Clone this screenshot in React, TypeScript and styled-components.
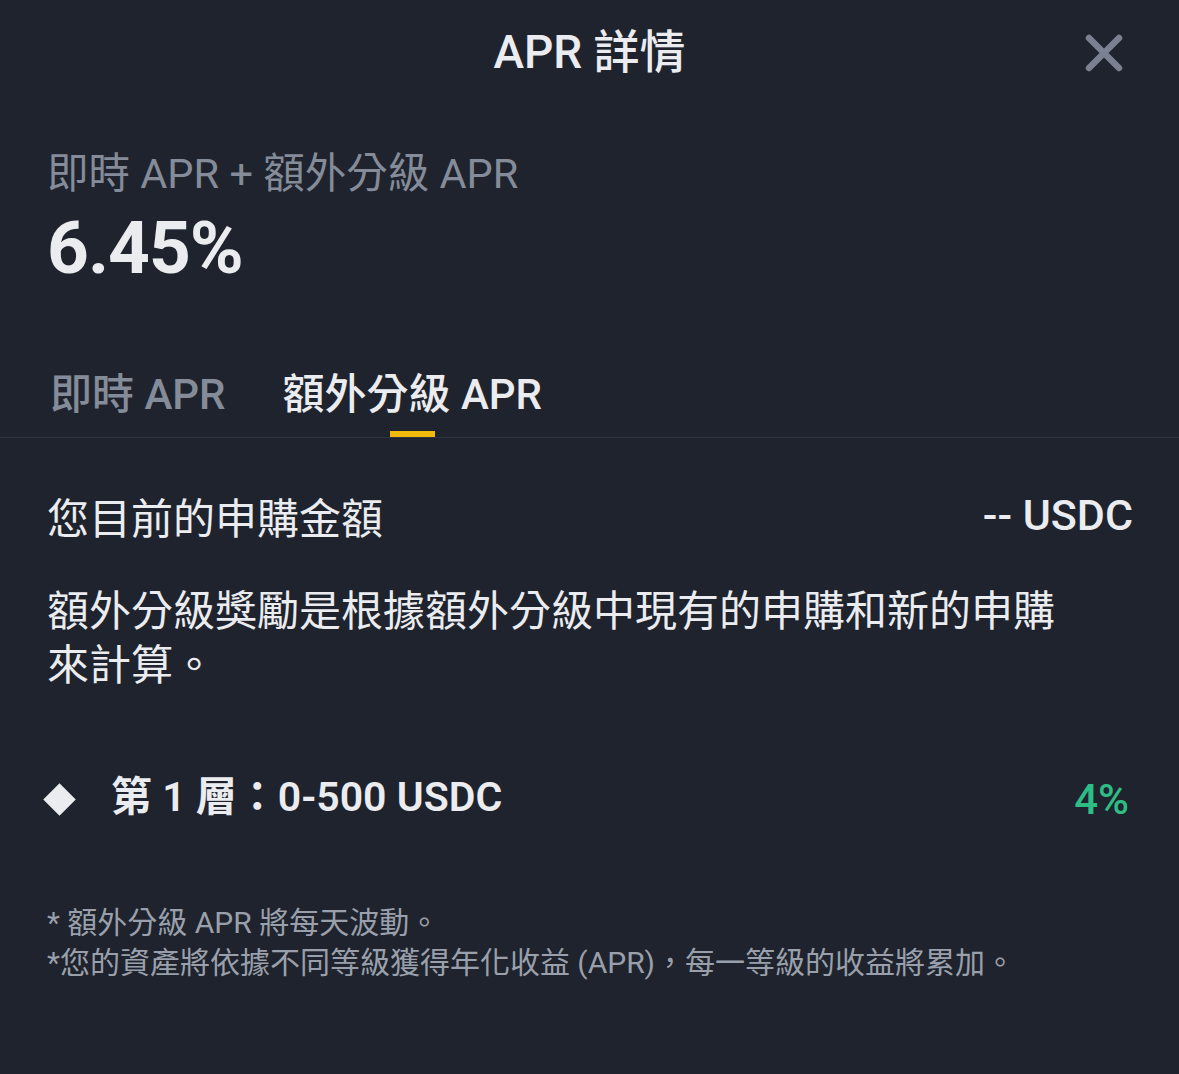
import React from "react";
import styled, { createGlobalStyle } from "styled-components";

const Global = createGlobalStyle`
  html, body { margin: 0; padding: 0; background: #1f232d; }
  body { font-family: Roboto, "Noto Sans CJK TC", "Noto Sans", sans-serif; color: #eaecef; }
  * { box-sizing: border-box; }
`;

const Page = styled.div`
  width: 1179px;
  min-height: 1074px;
  background: #1f232d;
  display: flex;
  flex-direction: column;
`;

const Header = styled.header`
  height: 104px;
  display: flex;
  align-items: center;
  justify-content: center;
  position: relative;
`;

const Title = styled.h1`
  margin: 0;
  font-size: 46px;
  font-weight: 500;
  line-height: 104px;
  color: #eaecef;
`;

const CloseButton = styled.button`
  position: absolute;
  right: 55px;
  top: 33px;
  width: 40px;
  height: 40px;
  padding: 0;
  border: none;
  background: transparent;
  display: flex;
  align-items: center;
  justify-content: center;
`;

const Summary = styled.section`
  padding: 46px 47px 0;
  display: flex;
  flex-direction: column;
  gap: 10px;
`;

const SummaryLabel = styled.div`
  font-size: 41.5px;
  line-height: 48px;
  color: #858c99;
`;

const SummaryValue = styled.div`
  font-size: 73px;
  font-weight: 700;
  line-height: 80px;
  color: #eaecef;
  letter-spacing: -1px;
`;

const TabBar = styled.nav`
  margin-top: 82px;
  padding: 0 50px;
  display: flex;
  gap: 57px;
  border-bottom: 1px solid #2f3440;
`;

const Tab = styled.div<{ $active?: boolean }>`
  display: flex;
  flex-direction: column;
  align-items: center;
  font-size: 42px;
  line-height: 50px;
  font-weight: 500;
  color: ${(p) => (p.$active ? "#eaecef" : "#858c99")};
  &::after {
    content: "";
    display: block;
    margin-top: 11px;
    width: 45px;
    height: 6px;
    background: ${(p) => (p.$active ? "#f0b90b" : "transparent")};
  }
`;

const Content = styled.section`
  padding: 52px 46px 0 47px;
  display: flex;
  flex-direction: column;
`;

const AmountRow = styled.div`
  display: flex;
  justify-content: space-between;
  align-items: center;
  height: 56px;
  margin-top: -3px;
  font-size: 42px;
  color: #eaecef;
`;

const AmountValue = styled.span`
  font-weight: 500;
  font-size: 43px;
`;

const Paragraph = styled.p`
  margin: 42px 0 0;
  font-size: 42px;
  line-height: 54px;
  color: #eaecef;
  max-width: 1020px;
`;

const TierRow = styled.div`
  margin-top: 76px;
  height: 60px;
  display: flex;
  align-items: center;
`;

const Diamond = styled.span`
  width: 23px;
  height: 23px;
  margin-left: 1px;
  margin-right: 40px;
  background: #eaecef;
  transform: rotate(45deg);
  flex-shrink: 0;
`;

const TierLabel = styled.span`
  font-size: 41px;
  font-weight: 600;
  color: #eaecef;
  flex: 1;
  margin-top: -12px;
`;

const TierRate = styled.span`
  font-size: 42px;
  font-weight: 500;
  color: #2ebd85;
  padding-right: 4px;
`;

const Notes = styled.div`
  margin-top: 74px;
  font-size: 30px;
  line-height: 40px;
  color: #9aa0ab;
`;

const CloseIcon = () => (
  <svg width="38" height="38" viewBox="0 0 38 38">
    <path d="M4 4 L34 34 M34 4 L4 34" stroke="#7b8190" strokeWidth="6.5" strokeLinecap="round" />
  </svg>
);

export default function App() {
  return (
    <Page>
      <Global />
      <Header>
        <Title>APR 詳情</Title>
        <CloseButton aria-label="close">
          <CloseIcon />
        </CloseButton>
      </Header>
      <Summary>
        <SummaryLabel>即時 APR + 額外分級 APR</SummaryLabel>
        <SummaryValue>6.45%</SummaryValue>
      </Summary>
      <TabBar>
        <Tab>即時 APR</Tab>
        <Tab $active>額外分級 APR</Tab>
      </TabBar>
      <Content>
        <AmountRow>
          <span>您目前的申購金額</span>
          <AmountValue>-- USDC</AmountValue>
        </AmountRow>
        <Paragraph>
          額外分級獎勵是根據額外分級中現有的申購和新的申購
          <br />
          來計算。
        </Paragraph>
        <TierRow>
          <Diamond />
          <TierLabel>第 1 層：0-500 USDC</TierLabel>
          <TierRate>4%</TierRate>
        </TierRow>
        <Notes>
          <div>* 額外分級 APR 將每天波動。</div>
          <div>*您的資產將依據不同等級獲得年化收益 (APR)，每一等級的收益將累加。</div>
        </Notes>
      </Content>
    </Page>
  );
}
